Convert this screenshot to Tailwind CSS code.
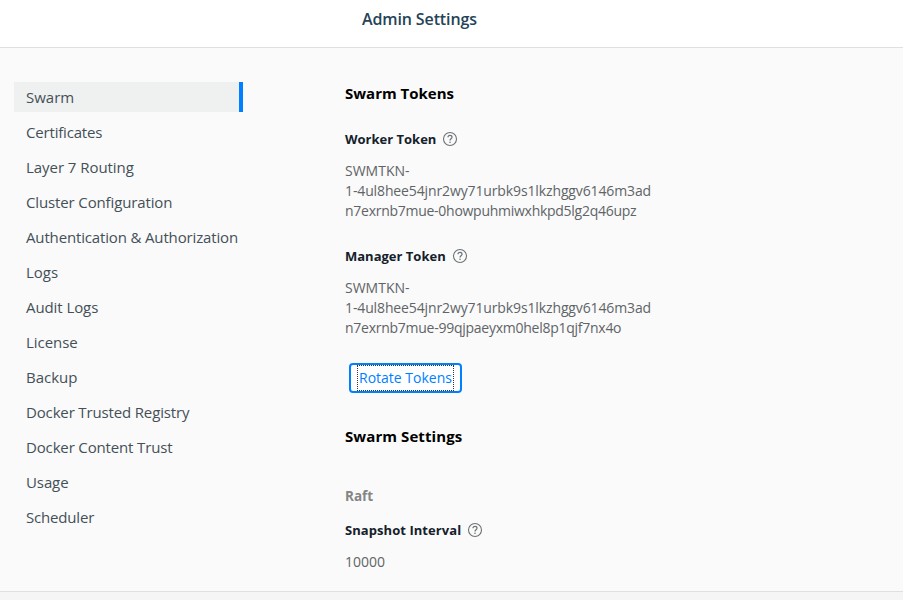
<!DOCTYPE html>
<html lang="en"><head><meta charset="utf-8"><title>Admin Settings</title>
<script src="https://cdn.jsdelivr.net/npm/@tailwindcss/browser@4"></script></head>
<body class="w-[903px] h-[600px] overflow-hidden bg-[#fafafa] font-['Open_Sans',sans-serif] flex flex-col">
<svg class="hidden"><symbol id="help" viewBox="0 0 16 16"><circle cx="8" cy="8" r="6.5" fill="none" stroke="#6c7378" stroke-width="1.1"/><path d="M6 6.3c0-1.2.8-1.9 2-1.9s2 .7 2 1.8c0 1.5-2 1.6-2 3.2" fill="none" stroke="#6c7378" stroke-width="1.2"/><circle cx="8" cy="11.3" r=".8" fill="#6c7378"/></symbol></svg>
<header class="h-12 shrink-0 bg-white border-b border-[#e0e0e0] pl-[362px] pt-[8px] text-[16px] leading-[22px] tracking-[-0.12px] font-semibold text-[#254356]">Admin Settings</header>
<main class="flex h-[543px] shrink-0">
<nav class="w-[229px] ml-[14px] pt-[34px] flex flex-col gap-[5px] text-[15px] leading-[30px] text-[#445058] whitespace-nowrap">
<a class="h-[30px] shrink-0 pl-3 bg-[#eff1f1] border-r-4 border-[#007fff]">Swarm</a>
<a class="h-[30px] pl-3 tracking-[-0.18px]">Certificates</a>
<a class="h-[30px] pl-3 tracking-[-0.05px]">Layer 7 Routing</a>
<a class="h-[30px] pl-3 tracking-[-0.13px]">Cluster Configuration</a>
<a class="h-[30px] pl-3 tracking-[-0.15px]">Authentication &amp; Authorization</a>
<a class="h-[30px] pl-3">Logs</a>
<a class="h-[30px] pl-3 tracking-[-0.08px]">Audit Logs</a>
<a class="h-[30px] pl-3 tracking-[-0.05px]">License</a>
<a class="h-[30px] pl-3">Backup</a>
<a class="h-[30px] pl-3 tracking-[-0.15px]">Docker Trusted Registry</a>
<a class="h-[30px] pl-3 tracking-[-0.15px]">Docker Content Trust</a>
<a class="h-[30px] pl-3 tracking-[-0.1px]">Usage</a>
<a class="h-[30px] pl-3 tracking-[-0.18px]">Scheduler</a>
</nav>
<section class="ml-[102px] pt-[35px] w-[330px] text-[13px] leading-5 text-[#5f6467] whitespace-nowrap">
<h2 class="text-[15px] font-bold text-black">Swarm Tokens</h2>
<h3 class="mt-[26px] flex items-center gap-[6px] font-bold text-[#14202a]">Worker Token<svg class="size-4"><use href="#help"/></svg></h3>
<p class="mt-3 text-[14px]">SWMTKN-<br><span class="tracking-[-0.125px]">1-4ul8hee54jnr2wy71urbk9s1lkzhggv6146m3ad</span><br><span class="tracking-[-0.27px]">n7exrnb7mue-0howpuhmiwxhkpd5lg2q46upz</span></p>
<h3 class="mt-[25px] flex items-center gap-[6px] font-bold text-[#14202a]">Manager Token<svg class="size-4"><use href="#help"/></svg></h3>
<p class="mt-3 text-[14px]">SWMTKN-<br><span class="tracking-[-0.125px]">1-4ul8hee54jnr2wy71urbk9s1lkzhggv6146m3ad</span><br><span class="tracking-[-0.26px]">n7exrnb7mue-99qjpaeyxm0hel8p1qjf7nx4o</span></p>
<button class="mt-[25px] ml-1 w-[113px] h-[30px] flex items-center justify-center border-2 border-[#007fff] rounded-[4px] bg-white text-[#007fff] text-[14px]"><span class="w-[97px] h-[26px] leading-[24px] border border-dotted border-[#333]">Rotate Tokens</span></button>
<h2 class="mt-[33px] text-[15px] tracking-[0.08px] font-bold text-black">Swarm Settings</h2>
<h4 class="mt-10 text-[13.5px] font-bold text-[#858585]">Raft</h4>
<h3 class="mt-[14px] flex items-center gap-[6px] font-bold tracking-[0.06px] text-[#14202a]">Snapshot Interval<svg class="size-4"><use href="#help"/></svg></h3>
<p class="mt-3 text-[14px]">10000</p>
</section></main>
<footer class="flex-1 border-t border-[#e0e0e0] bg-[#f5f5f5]"></footer>
</body></html>
